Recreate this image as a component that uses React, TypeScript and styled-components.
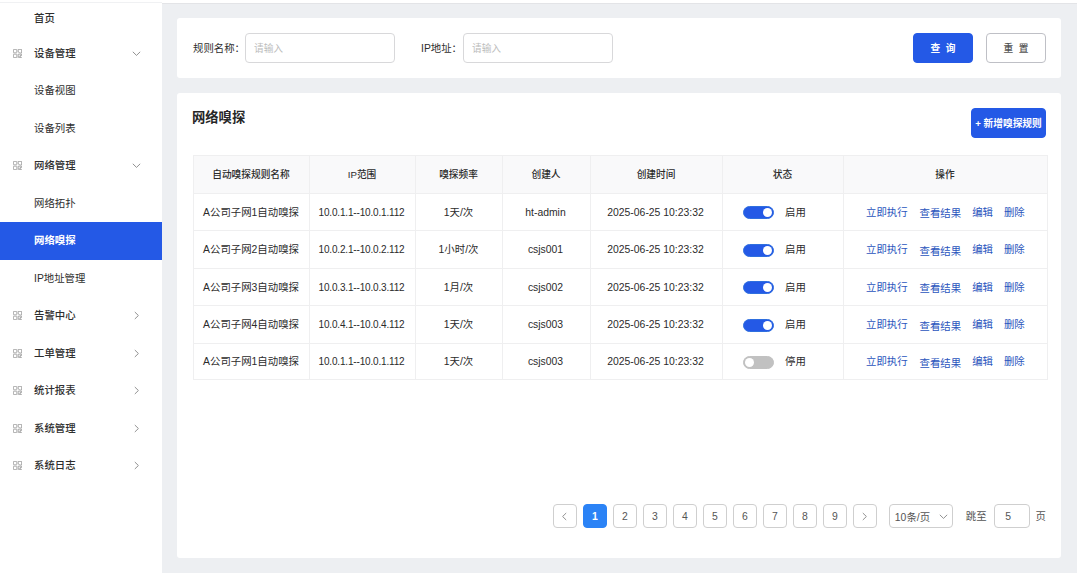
import { useState } from "react";
import styled, { createGlobalStyle } from "styled-components";

const GlobalStyle = createGlobalStyle`
  * {
    box-sizing: border-box;
  }

  body {
    margin: 0;
    background-color: #edeff2;
    color: #2e2e2e;
    font-family: "Liberation Sans", "Noto Sans CJK SC", sans-serif;
    font-size: 10.4px;
  }

  button,
  input {
    font-family: inherit;
  }
`;

const Page = styled.div`
  display: flex;
  width: 100%;
  height: 573px;
  overflow: hidden;
`;

const Sidebar = styled.nav`
  display: flex;
  flex-direction: column;
  flex: 0 0 162px;
  padding-top: 2px;
  background-color: #fff;
`;

const HomeItem = styled.a`
  display: flex;
  align-items: center;
  height: 32.5px;
  padding: 0 0 2px 34px;
  border-top: 1px solid #f0f1f3;
  font-weight: 500;
`;

const MenuItem = styled.a<{ $active?: boolean; $child?: boolean }>`
  display: flex;
  align-items: center;
  flex: 0 0 37.5px;
  padding: 0 21.5px 0 ${({ $child }) => ($child ? "34px" : "13px")};
  background-color: ${({ $active }) => ($active ? "#2459e6" : "transparent")};
  color: ${({ $active }) => ($active ? "#fff" : "#2e2e2e")};
  font-weight: ${({ $active, $child }) => ($active ? 700 : $child ? 400 : 500)};
  white-space: nowrap;
  cursor: pointer;
`;

const MenuIcon = styled.svg`
  width: 9px;
  height: 9px;
  margin-right: 12px;
  color: #8c8c8c;
`;

const MenuLabel = styled.span`
  flex: 1;
  padding-bottom: 2px;
`;

const ChevronSvg = styled.svg`
  flex: none;
  color: #858585;
`;

const Main = styled.main`
  display: flex;
  flex-direction: column;
  flex: 1;
  min-width: 0;
`;

const TopStrip = styled.div`
  flex: 0 0 4px;
  margin-bottom: 14px;
  background-color: #fff;
  border-bottom: 1px solid #e3e4e7;
`;

const Card = styled.section`
  margin: 0 16px 15px 15px;
  padding: 15px;
  background-color: #fff;
  border-radius: 3px;
`;

const FilterBar = styled(Card)`
  display: flex;
  align-items: center;
  flex: 0 0 60px;
  padding-left: 16px;
`;

const Field = styled.label`
  display: flex;
  align-items: center;
  margin-right: 26px;
  white-space: nowrap;
`;

const FieldName = styled.span<{ $width: number }>`
  width: ${({ $width }) => $width}px;
  padding-bottom: 1px;
`;

const TextInput = styled.input`
  width: 150px;
  height: 30px;
  padding: 0 8px;
  border: 1px solid #d8d8da;
  border-radius: 4px;
  font-size: 9.7px;
  outline: none;

  &::placeholder {
    color: #bcbcbc;
  }
`;

const Actions = styled.div`
  display: flex;
  gap: 13px;
  margin-left: auto;
`;

const Button = styled.button<{ $primary?: boolean }>`
  width: 60px;
  height: 30px;
  padding: 0;
  border: 1px solid ${({ $primary }) => ($primary ? "#2459e6" : "#bfc0c6")};
  border-radius: 4px;
  background-color: ${({ $primary }) => ($primary ? "#2459e6" : "#fff")};
  color: ${({ $primary }) => ($primary ? "#fff" : "#555")};
  font-size: 9.7px;
  font-weight: ${({ $primary }) => ($primary ? 700 : 500)};
  word-spacing: 3px;
  white-space: nowrap;
  cursor: pointer;
`;

const AddButton = styled(Button)`
  width: 75px;
  word-spacing: 0;
`;

const ListCard = styled(Card)`
  display: flex;
  flex-direction: column;
  flex: 1;
`;

const CardHeader = styled.header`
  display: flex;
  justify-content: space-between;
  height: 30px;
  margin-bottom: 17px;
`;

const Title = styled.h1`
  margin: 0;
  color: #262626;
  font-size: 13.3px;
  line-height: 20px;
`;

const Table = styled.div`
  width: 855px;
  margin-left: 1px;
  border-top: 1px solid #efeff0;
  border-left: 1px solid #efeff0;
`;

const Row = styled.div<{ $height: number; $head?: boolean }>`
  display: grid;
  grid-template-columns: 116px 106px 87px 88px 132px 121px 204px;
  height: ${({ $height }) => $height}px;
  background-color: ${({ $head }) => ($head ? "#f9f9fa" : "#fff")};
  font-size: ${({ $head }) => ($head ? "9.7px" : "10.4px")};
  font-weight: ${({ $head }) => ($head ? 500 : 400)};
`;

const Cell = styled.div`
  display: flex;
  align-items: center;
  justify-content: center;
  padding: 0 1px 2px 0;
  border-right: 1px solid #efeff0;
  border-bottom: 1px solid #efeff0;
  color: #2b2b2b;
  white-space: nowrap;
`;

const LatinCell = styled(Cell)`
  padding: 0 2px 0 0;
`;

const RangeCell = styled(LatinCell)`
  font-size: 10px;
  letter-spacing: -0.17px;
`;

const StateCell = styled(Cell)`
  justify-content: flex-start;
  gap: 11px;
  padding-left: 20px;
`;

const LinkCell = styled(Cell)`
  justify-content: flex-start;
  padding-left: 22px;
`;

const Link = styled.a<{ $gap?: number; $drop?: boolean }>`
  margin-right: ${({ $gap = 0 }) => $gap}px;
  padding-top: ${({ $drop }) => ($drop ? "3px" : "0")};
  color: #2a55bd;
  cursor: pointer;
`;

const Switch = styled.button<{ $on: boolean }>`
  display: flex;
  justify-content: ${({ $on }) => ($on ? "flex-end" : "flex-start")};
  align-items: center;
  width: 31px;
  height: 13px;
  margin-top: 3px;
  padding: 0 1px;
  border: 1px solid ${({ $on }) => ($on ? "#2f6fdf" : "#c1c1c1")};
  border-radius: 7px;
  background-color: ${({ $on }) => ($on ? "#2459e6" : "#c1c1c1")};
  cursor: pointer;
`;

const Knob = styled.span`
  width: 9px;
  height: 9px;
  border-radius: 50%;
  background-color: #fff;
`;

const Pagination = styled.footer`
  display: flex;
  align-items: center;
  justify-content: flex-end;
  gap: 6px;
  margin-top: auto;
  padding-bottom: 15px;
  color: #555;
`;

const PageButton = styled.button<{ $current?: boolean }>`
  display: flex;
  align-items: center;
  justify-content: center;
  width: 24px;
  height: 24px;
  padding: 0;
  border: 1px solid ${({ $current }) => ($current ? "#2b83f6" : "#cfcfcf")};
  border-radius: 4px;
  background-color: ${({ $current }) => ($current ? "#2b83f6" : "#fff")};
  color: ${({ $current }) => ($current ? "#fff" : "#555")};
  font-size: 10.4px;
  font-weight: ${({ $current }) => ($current ? 700 : 400)};
`;

const SizeSelect = styled.div`
  display: flex;
  align-items: center;
  justify-content: space-between;
  width: 64px;
  height: 24px;
  margin: 0 7px 0 6px;
  padding: 0 4px 0 5px;
  border: 1px solid #cfcfcf;
  border-radius: 4px;
`;

const JumpText = styled.span`
  padding-bottom: 2px;
`;

const JumpInput = styled(TextInput)`
  width: 36px;
  height: 24px;
  margin-left: 1px;
  padding: 0 7px 0 0;
  border-color: #cfcfcf;
  color: #555;
  font-size: 10.4px;
  text-align: center;
`;

const menus = [
  { label: "设备管理", open: true, children: ["设备视图", "设备列表"] },
  {
    label: "网络管理",
    open: true,
    children: ["网络拓扑", "网络嗅探", "IP地址管理"],
  },
  { label: "告警中心" },
  { label: "工单管理" },
  { label: "统计报表" },
  { label: "系统管理" },
  { label: "系统日志" },
];

const columns = [
  "自动嗅探规则名称",
  "IP范围",
  "嗅探频率",
  "创建人",
  "创建时间",
  "状态",
  "操作",
];

const initialRules = [
  { name: "A公司子网1自动嗅探", range: "10.0.1.1--10.0.1.112", rate: "1天/次", creator: "ht-admin", on: true, height: 37 },
  { name: "A公司子网2自动嗅探", range: "10.0.2.1--10.0.2.112", rate: "1小时/次", creator: "csjs001", on: true, height: 38 },
  { name: "A公司子网3自动嗅探", range: "10.0.3.1--10.0.3.112", rate: "1月/次", creator: "csjs002", on: true, height: 37 },
  { name: "A公司子网4自动嗅探", range: "10.0.4.1--10.0.4.112", rate: "1天/次", creator: "csjs003", on: true, height: 38 },
  { name: "A公司子网1自动嗅探", range: "10.0.1.1--10.0.1.112", rate: "1天/次", creator: "csjs003", on: false, height: 36 },
];

const chevrons = {
  down: { width: 9, d: "M0.8 2.8 L4.5 6.4 L8.2 2.8" },
  right: { width: 9, d: "M2.8 1 L6.4 4.5 L2.8 8" },
  left: { width: 9, d: "M6.2 1 L2.6 4.5 L6.2 8" },
};

const Chevron = ({ to }: { to: keyof typeof chevrons }) => {
  const { width, d } = chevrons[to];
  return (
    <ChevronSvg width={width} height={9} fill="none" stroke="currentColor" strokeWidth="0.9">
      <path d={d} />
    </ChevronSvg>
  );
};

const AppsIcon = () => (
  <MenuIcon viewBox="0 0 9 9" fill="none" stroke="currentColor" strokeWidth="0.7">
    <rect x="0.4" y="0.4" width="3.4" height="3.4" rx="0.4" />
    <path d="M5.2 0.4 H8.6 V4 H7 L5.2 3 Z" />
    <rect x="0.4" y="5.2" width="3.4" height="3.4" rx="0.4" />
    <path d="M5.2 5.2 H8.5 V6.6 H7 L5.2 8.6 Z M6.9 7.2 L8.5 8.6 H6" />
  </MenuIcon>
);

const App = () => {
  const [rules, setRules] = useState(initialRules);
  const [page, setPage] = useState(1);

  const toggleRule = (index: number) => {
    setRules((prev) =>
      prev.map((rule, i) => (i === index ? { ...rule, on: !rule.on } : rule))
    );
  };

  return (
    <Page>
      <GlobalStyle />
      <Sidebar>
        <HomeItem>首页</HomeItem>
        {menus.map(({ label, open, children }) => [
          <MenuItem key={label}>
            <AppsIcon />
            <MenuLabel>{label}</MenuLabel>
            <Chevron to={open ? "down" : "right"} />
          </MenuItem>,
          children?.map((child) => (
            <MenuItem key={child} $child $active={child === "网络嗅探"}>
              <MenuLabel>{child}</MenuLabel>
            </MenuItem>
          )),
        ])}
      </Sidebar>
      <Main>
        <TopStrip />
        <FilterBar>
          <Field>
            <FieldName $width={52}>规则名称：</FieldName>
            <TextInput placeholder="请输入" />
          </Field>
          <Field>
            <FieldName $width={42}>IP地址：</FieldName>
            <TextInput placeholder="请输入" />
          </Field>
          <Actions>
            <Button $primary>查 询</Button>
            <Button>重 置</Button>
          </Actions>
        </FilterBar>
        <ListCard>
          <CardHeader>
            <Title>网络嗅探</Title>
            <AddButton $primary>+ 新增嗅探规则</AddButton>
          </CardHeader>
          <Table>
            <Row $head $height={38}>
              {columns.map((column) => (
                <Cell key={column}>{column}</Cell>
              ))}
            </Row>
            {rules.map((rule, index) => (
              <Row key={index} $height={rule.height}>
                <Cell>{rule.name}</Cell>
                <RangeCell>{rule.range}</RangeCell>
                <Cell>{rule.rate}</Cell>
                <LatinCell>{rule.creator}</LatinCell>
                <LatinCell>2025-06-25 10:23:32</LatinCell>
                <StateCell>
                  <Switch $on={rule.on} onClick={() => toggleRule(index)}>
                    <Knob />
                  </Switch>
                  {rule.on ? "启用" : "停用"}
                </StateCell>
                <LinkCell>
                  <Link $gap={12}>立即执行</Link>
                  <Link $gap={11} $drop>
                    查看结果
                  </Link>
                  <Link $gap={11}>编辑</Link>
                  <Link>删除</Link>
                </LinkCell>
              </Row>
            ))}
          </Table>
          <Pagination>
            <PageButton>
              <Chevron to="left" />
            </PageButton>
            {[1, 2, 3, 4, 5, 6, 7, 8, 9].map((n) => (
              <PageButton key={n} $current={n === page} onClick={() => setPage(n)}>
                {n}
              </PageButton>
            ))}
            <PageButton>
              <Chevron to="right" />
            </PageButton>
            <SizeSelect>
              <span>10条/页</span>
              <Chevron to="down" />
            </SizeSelect>
            <JumpText>跳至</JumpText>
            <JumpInput defaultValue="5" />
            <JumpText>页</JumpText>
          </Pagination>
        </ListCard>
      </Main>
    </Page>
  );
};

export default App;
